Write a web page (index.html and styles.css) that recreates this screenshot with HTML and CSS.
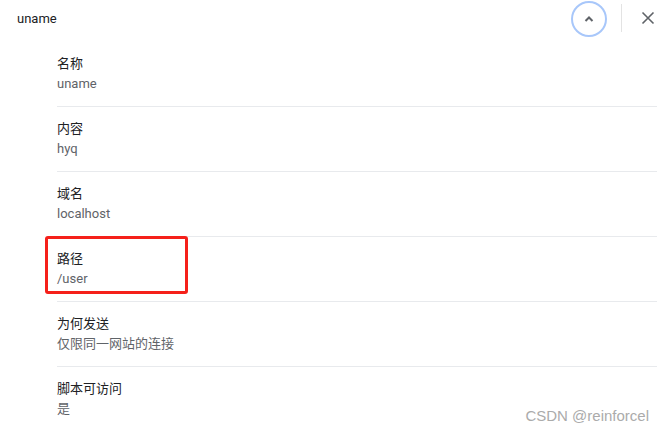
FILE: index.html
```html
<!DOCTYPE html>
<html>
<head>
<meta charset="utf-8">
<link rel="stylesheet" href="styles.css">
</head>
<body>
<div class="panel">
  <div class="header">
    <div class="title">uname</div>
    <div class="spacer"></div>
    <div class="collapse">
      <svg width="14" height="14" viewBox="0 0 14 14"><path d="M3.5 9 L7 5.5 L10.5 9" fill="none" stroke="#5f6368" stroke-width="2"/></svg>
    </div>
    <div class="divider"></div>
    <div class="close">
      <svg width="14" height="14" viewBox="0 0 14 14"><path d="M1.5 1.5 L12.5 12.5 M12.5 1.5 L1.5 12.5" fill="none" stroke="#5f6368" stroke-width="1.6"/></svg>
    </div>
  </div>
  <div class="list">
    <div class="row"><div class="label">名称</div><div class="value">uname</div></div>
    <div class="row"><div class="label">内容</div><div class="value">hyq</div></div>
    <div class="row"><div class="label">域名</div><div class="value">localhost</div></div>
    <div class="row"><div class="label">路径</div><div class="value">/user</div><div class="mark"></div></div>
    <div class="row"><div class="label">为何发送</div><div class="value">仅限同一网站的连接</div></div>
    <div class="row last"><div class="label">脚本可访问</div><div class="value">是</div></div>
  </div>
  <div class="watermark">CSDN @reinforcel</div>
</div>
</body>
</html>
```
FILE: styles.css
```css
html, body {
  margin: 0;
  padding: 0;
  background: #ffffff;
}
body {
  font-family: "Roboto", "Noto Sans CJK SC", sans-serif;
  font-size: 13px;
  color: #202124;
}
.panel {
  position: relative;
  width: 664px;
  height: 430px;
  overflow: hidden;
}
.header {
  display: flex;
  align-items: center;
  height: 36px;
  padding-left: 17px;
  padding-right: 9px;
}
.title {
  font-size: 13px;
  color: #202124;
}
.spacer {
  flex: 1;
}
.collapse {
  width: 32px;
  height: 32px;
  border: 2px solid #a8c7fa;
  border-radius: 50%;
  display: flex;
  align-items: center;
  justify-content: center;
  margin-top: 1px;
}
.divider {
  width: 1px;
  height: 28px;
  background: #e3e3e3;
  margin-left: 14px;
  margin-right: 19px;
}
.close {
  width: 14px;
  height: 14px;
  display: flex;
}
.list {
  padding-top: 6px;
  padding-left: 57px;
  padding-right: 7px;
}
.row {
  position: relative;
  height: 65px;
  padding-top: 12px;
  box-sizing: border-box;
  border-bottom: 1px solid #e8eaed;
}
.row.last {
  border-bottom: none;
}
.label {
  line-height: 20px;
  color: #202124;
}
.value {
  line-height: 20px;
  color: #5f6368;
}
.mark {
  position: absolute;
  left: -12px;
  top: -1px;
  width: 143px;
  height: 58px;
  box-sizing: border-box;
  border: 3px solid #f5201a;
  border-radius: 3px;
}
.watermark {
  position: absolute;
  right: 15px;
  bottom: 6px;
  font-family: "Liberation Sans", Arial, sans-serif;
  font-size: 15px;
  color: #ababab;
}
```
